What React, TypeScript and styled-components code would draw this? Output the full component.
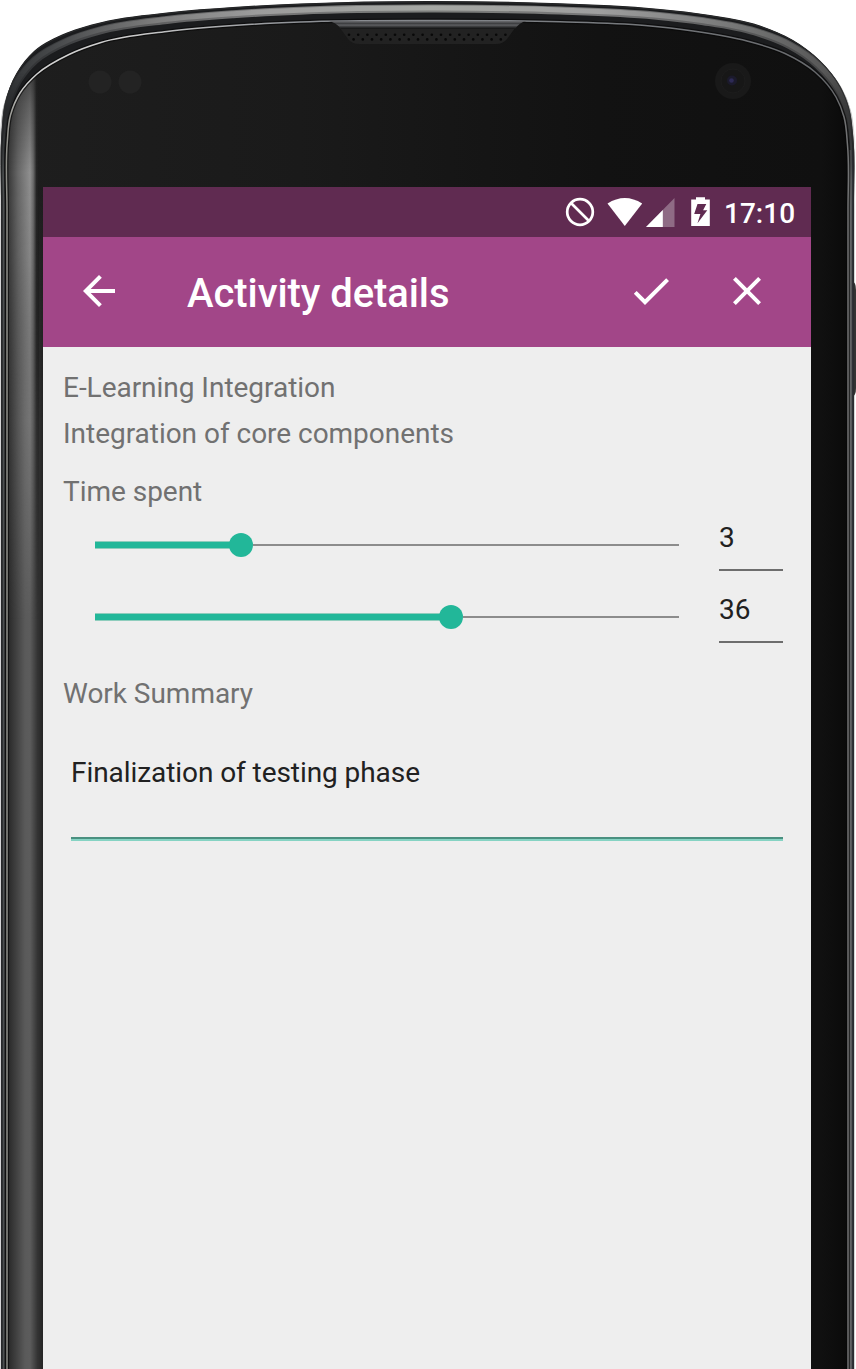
import React from 'react';
import styled, { createGlobalStyle } from 'styled-components';

const GlobalStyle = createGlobalStyle`
  * { box-sizing: border-box; }
  body {
    margin: 0;
    background: #fff;
    font-family: Roboto, "Liberation Sans", sans-serif;
  }
`;

type Point = [number, number];

// Outer silhouette of the handset and the glass edge, sampled at matching stations.
const outer: Point[] = [
  [1, 1400], [1, 230], [1, 200], [1.8, 130], [5, 103], [16.5, 73], [34, 51], [67, 32.5], [100, 22.5],
  [167, 12.5], [233, 7], [300, 3.5], [428, 1], [560, 3.3], [660, 9], [710, 15], [760, 25.5],
  [793, 40], [820, 60.5], [840, 86], [849, 108], [853, 135], [854, 200], [854, 230], [854, 1400],
];
const inner: Point[] = [
  [7, 1400], [7, 240], [7, 210], [7.2, 143], [10.5, 115], [20, 93], [37, 74], [69, 54.5], [101, 42.5],
  [167, 31.5], [233, 25.5], [300, 22], [428, 20.5], [560, 21.8], [645, 25.5], [693, 31], [747, 41],
  [785, 53.5], [815, 72], [836, 97], [844, 117], [847.5, 145], [848, 210], [848, 240], [848, 1400],
];

function between(t: number): Point[] {
  return outer.map(([x, y], i) => [x + (inner[i][0] - x) * t, y + (inner[i][1] - y) * t] as Point);
}

// Catmull-Rom spline with chord-scaled tangents.
function smooth(points: Point[]): string {
  const dist = (a: Point, b: Point) => Math.hypot(a[0] - b[0], a[1] - b[1]);
  const tangent = (i: number): Point => {
    const p = points[i];
    const a = points[Math.max(i - 1, 0)];
    const b = points[Math.min(i + 1, points.length - 1)];
    const da = dist(p, a) || 1e6;
    const db = dist(p, b) || 1e6;
    // The nearer neighbour weighs more, which keeps uneven spacing from bulging.
    const x = ((p[0] - a[0]) / da) * db + ((b[0] - p[0]) / db) * da;
    const y = ((p[1] - a[1]) / da) * db + ((b[1] - p[1]) / db) * da;
    const d = Math.hypot(x, y) || 1;
    return [x / d, y / d];
  };
  let d = `M${points[0][0]} ${points[0][1]}`;
  for (let i = 0; i < points.length - 1; i++) {
    const p = points[i];
    const q = points[i + 1];
    const k = dist(p, q) / 3;
    const tp = tangent(i);
    const tq = tangent(i + 1);
    const n = (v: number) => v.toFixed(2);
    d += `C${n(p[0] + tp[0] * k)} ${n(p[1] + tp[1] * k)} ${n(q[0] - tq[0] * k)} ${n(q[1] - tq[1] * k)} ${n(q[0])} ${n(q[1])}`;
  }
  return d;
}

const Stage = styled.main`
  position: relative;
  width: 856px;
  height: 1369px;
  padding: 187px 45px 0 43px;
  overflow: hidden;
`;

const Handset = styled.svg`
  position: absolute;
  inset: 0;
`;

const Screen = styled.section`
  position: relative;
  display: flex;
  flex-direction: column;
  height: 100%;
  background: #eeeeee;
`;

const StatusBar = styled.div`
  display: flex;
  align-items: center;
  justify-content: flex-end;
  height: 50px;
  padding-right: 16px;
  background: #602b51;
`;

const StatusIcons = styled.svg`
  margin-right: 13px;
`;

const Clock = styled.time`
  width: 71px;
  font-size: 28px;
  font-weight: 500;
  line-height: 50px;
  padding-top: 3px;
  white-space: nowrap;
  color: #fff;
`;

const Toolbar = styled.header`
  display: flex;
  align-items: center;
  height: 110px;
  padding: 0 40px 2px 32px;
  background: #a24688;
`;

const Title = styled.h1`
  flex: 1;
  margin: 0 0 0 64px;
  padding-top: 6px;
  font-size: 40px;
  line-height: 48px;
  font-weight: 500;
  letter-spacing: -0.07px;
  color: #fff;
`;

const ToolButton = styled.button<{ $gap?: number }>`
  display: flex;
  margin: 0 0 0 ${({ $gap = 0 }) => $gap}px;
  padding: 0;
  border: 0;
  background: none;
  color: #fff;
`;

const Content = styled.div`
  display: flex;
  flex-direction: column;
  padding: 18px 28px 0 20px;
`;

const Label = styled.div<{ $top?: number }>`
  margin-top: ${({ $top = 0 }) => $top}px;
  font-size: 28px;
  line-height: 46px;
  letter-spacing: -0.03px;
  color: #717171;
`;

const SliderRow = styled.div`
  display: flex;
  align-items: flex-start;
  justify-content: space-between;
  height: 72px;
  padding-left: 32px;
`;

const Track = styled.div`
  display: flex;
  align-items: center;
  width: 584px;
  height: 60px;
`;

const Filled = styled.div`
  height: 8px;
  border: solid #8fcdbd;
  border-width: 1px 0;
  background: #22b799;
`;

const Thumb = styled.div`
  width: 24px;
  height: 24px;
  margin: 0 0 0 -12px;
  border-radius: 50%;
  background: #22b799;
`;

const Rest = styled.div`
  flex: 1;
  height: 2px;
  background: #8c8c8c;
`;

const NumberField = styled.div`
  width: 64px;
  height: 56px;
  border-bottom: 2px solid #6d6d6d;
  font-size: 28px;
  line-height: 46px;
  color: #212121;
`;

const SummaryField = styled.div`
  height: 91px;
  margin: 33px 0 0 8px;
  border-bottom: 2px solid #85d3c3;
  box-shadow: inset 0 -2px 0 #4a9080;
  font-size: 28px;
  line-height: 46px;
  letter-spacing: -0.07px;
  color: #212121;
`;

function Slider({ value, max }: { value: number; max: number }) {
  return (
    <SliderRow>
      <Track>
        <Filled style={{ width: `${(value / max) * 100}%` }} />
        <Thumb />
        <Rest />
      </Track>
      <NumberField>{value}</NumberField>
    </SliderRow>
  );
}

function Phone() {
  const dots: Point[] = [];
  for (let i = 0; i < 18; i++) {
    dots.push([349 + i * 9.2, 34.8]);
    if (i < 17) dots.push([353.6 + i * 9.2, 39.4]);
  }
  const face = smooth(inner);
  return (
    <Handset width="856" height="1369" viewBox="0 0 856 1369" aria-hidden="true">
      <defs>
        <linearGradient id="leftEdge" gradientUnits="userSpaceOnUse" x1="7" y1="0" x2="43" y2="0">
          <stop offset="0" stopColor="#1d1d1d" />
          <stop offset=".1" stopColor="#303030" />
          <stop offset=".5" stopColor="#5a5a5a" />
          <stop offset=".64" stopColor="#5c5c5c" />
          <stop offset=".85" stopColor="#333" />
          <stop offset="1" stopColor="#252525" />
        </linearGradient>
        <linearGradient id="shine" gradientUnits="userSpaceOnUse" x1="7" y1="0" x2="39" y2="0">
          <stop offset="0" stopColor="#333" />
          <stop offset=".35" stopColor="#686868" />
          <stop offset=".72" stopColor="#909090" />
          <stop offset=".82" stopColor="#6c6c6c" />
          <stop offset=".92" stopColor="#252525" />
          <stop offset="1" stopColor="#1c1c1c" />
        </linearGradient>
        <linearGradient id="shineFade" x1="0" y1="0" x2="0" y2="1">
          <stop offset="0" stopColor="#fff" stopOpacity=".2" />
          <stop offset=".08" stopColor="#fff" stopOpacity=".6" />
          <stop offset=".2" stopColor="#fff" />
          <stop offset=".35" stopColor="#fff" stopOpacity=".9" />
          <stop offset="1" stopColor="#fff" stopOpacity="0" />
        </linearGradient>
        <mask id="shineMask" maskUnits="userSpaceOnUse" x="0" y="0" width="60" height="640">
          <rect x="0" y="60" width="60" height="560" fill="url(#shineFade)" />
        </mask>
        <linearGradient id="leftFade" gradientUnits="userSpaceOnUse" x1="0" y1="187" x2="0" y2="420">
          <stop offset="0" stopColor="#fff" stopOpacity="0" />
          <stop offset="1" stopColor="#fff" />
        </linearGradient>
        <mask id="leftMask" maskUnits="userSpaceOnUse" x="0" y="0" width="60" height="1369">
          <rect x="0" y="187" width="60" height="1200" fill="url(#leftFade)" />
        </mask>
        <linearGradient id="glass" gradientUnits="userSpaceOnUse" x1="0" y1="0" x2="856" y2="0">
          <stop offset="0" stopColor="#1e1e1e" />
          <stop offset=".35" stopColor="#1a1a1a" />
          <stop offset=".7" stopColor="#121212" />
          <stop offset=".96" stopColor="#101010" />
          <stop offset="1" stopColor="#080808" />
        </linearGradient>
        <linearGradient id="band" gradientUnits="userSpaceOnUse" x1="0" y1="0" x2="856" y2="0">
          <stop offset="0" stopColor="#303234" />
          <stop offset=".06" stopColor="#46484a" />
          <stop offset=".18" stopColor="#7c7c7c" />
          <stop offset=".3" stopColor="#9c9c9c" />
          <stop offset=".5" stopColor="#a6a8a4" />
          <stop offset=".7" stopColor="#9f9f9f" />
          <stop offset=".87" stopColor="#737474" />
          <stop offset=".96" stopColor="#585858" />
          <stop offset="1" stopColor="#4c4c4c" />
        </linearGradient>
        <linearGradient id="rim" gradientUnits="userSpaceOnUse" x1="0" y1="0" x2="856" y2="0">
          <stop offset="0" stopColor="#77776f" />
          <stop offset=".03" stopColor="#d2d2d2" />
          <stop offset=".15" stopColor="#ccc" />
          <stop offset=".35" stopColor="#8d9095" />
          <stop offset=".7" stopColor="#777a7e" />
          <stop offset=".97" stopColor="#65676a" />
          <stop offset="1" stopColor="#777" />
        </linearGradient>
        <linearGradient id="speaker" x1="0" y1="0" x2="0" y2="1">
          <stop offset="0" stopColor="#6c6d70" />
          <stop offset=".35" stopColor="#393a3c" />
          <stop offset=".5" stopColor="#626366" />
          <stop offset=".75" stopColor="#303132" />
          <stop offset="1" stopColor="#111" />
        </linearGradient>
        <linearGradient id="upperFade" x1="0" y1="0" x2="0" y2="1">
          <stop offset=".45" stopColor="#fff" />
          <stop offset="1" stopColor="#fff" stopOpacity="0" />
        </linearGradient>
        <mask id="upper" maskUnits="userSpaceOnUse" x="0" y="0" width="856" height="160">
          <rect width="856" height="160" fill="url(#upperFade)" />
        </mask>
        <linearGradient id="sideFade" gradientUnits="userSpaceOnUse" x1="0" y1="110" x2="0" y2="180">
          <stop offset="0" stopColor="#fff" stopOpacity="0" />
          <stop offset="1" stopColor="#fff" />
        </linearGradient>
        <mask id="sides" maskUnits="userSpaceOnUse" x="0" y="0" width="856" height="1369">
          <rect y="100" width="856" height="1269" fill="url(#sideFade)" />
        </mask>
        <clipPath id="faceClip"><path d={face} /></clipPath>
      </defs>

      <path d="M852 281q4 1 4 9v98q0 8-4 9z" fill="#343434" />
      <path d={smooth(outer)} fill="#1b1c1e" />
      <g fill="none">
        <g mask="url(#upper)">
          <path d={smooth(between(0.39))} stroke="url(#band)" strokeWidth="8" opacity=".7" />
          <path d={smooth(between(0.36))} stroke="url(#band)" strokeWidth="5" />
        </g>
        <path d={smooth(between(0.05))} stroke="#2b2c2d" strokeWidth="1" />
        <g mask="url(#sides)">
          <path d={smooth(between(0.43))} stroke="#4c4f50" strokeWidth="2" />
          <path d={smooth(between(0.76))} stroke="#222" strokeWidth="1.4" />
          <path d="M850.2 150V1369" stroke="#626466" strokeWidth="2.6" />
          <path d="M852.8 150V1369" stroke="#303238" strokeWidth="1.4" />
        </g>
      </g>
      <path d={face} fill="url(#glass)" />
      <g clipPath="url(#faceClip)">
        <g mask="url(#leftMask)">
          <rect x="7" y="187" width="37" height="1182" fill="url(#leftEdge)" />
        </g>
        <g mask="url(#shineMask)"><rect x="7" y="60" width="32" height="560" fill="url(#shine)" /></g>
      </g>
      <path d={face} fill="none" stroke="#080808" strokeWidth="4" opacity=".65" />
      <path d={face} fill="none" stroke="url(#rim)" strokeWidth="1.5" />

      <path d="M330 21h196q-6 1-11 7l-8 11q-4 5-11 5H359q-7 0-11-5l-8-11q-4-6-10-7z" fill="#222" />
      <path d="M328 21h198q-6 1-11 8H341q-5-7-13-8z" fill="url(#speaker)" />
      <g fill="#080808">
        {dots.map(([x, y]) => <circle key={`${x}-${y}`} cx={x} cy={y} r="1.3" />)}
      </g>

      <circle cx="100" cy="82" r="11.5" fill="#232323" />
      <circle cx="130" cy="82" r="11.5" fill="#232323" />
      <circle cx="733" cy="81" r="18" fill="#191919" />
      <circle cx="733" cy="81" r="12" fill="#171717" stroke="#1d1d1d" />
      <circle cx="732" cy="80.5" r="5" fill="#1b1a2b" />
      <circle cx="731.5" cy="80.5" r="2.3" fill="#2d2a55" />
    </Handset>
  );
}

export default function App() {
  return (
    <>
      <GlobalStyle />
      <Stage>
        <Phone />
        <Screen>
          <StatusBar>
            <StatusIcons width="148" height="50" viewBox="0 0 148 50" aria-hidden="true">
              <g fill="none" stroke="#fff" strokeWidth="2.7">
                <circle cx="17" cy="25" r="12.8" />
                <path d="M8 16l18 18" />
              </g>
              <path d="M44.5 16.5Q61.8 5.5 79.2 16.5L61.8 39z" fill="#fff" />
              <path d="M111.5 11V40H83z" fill="#8f6b85" />
              <path d="M99.8 23V40H83z" fill="#fff" />
              <path fillRule="evenodd" fill="#fff" d="M128.2 12.6h4.8v-2.4h9v2.4h4.8V39h-18.6zM134.5 17h8.8l-3.2 6.3h4.2l-9.8 13 2.9-9.3h-6.2z" />
            </StatusIcons>
            <Clock>17:10</Clock>
          </StatusBar>
          <Toolbar>
            <ToolButton aria-label="Back">
              <svg width="48" height="48" viewBox="0 0 24 24" fill="currentColor">
                <path d="M20 11H7.83l5.59-5.59L12 4l-8 8 8 8 1.41-1.41L7.83 13H20v-2z" />
              </svg>
            </ToolButton>
            <Title>Activity details</Title>
            <ToolButton aria-label="Save">
              <svg width="48" height="48" viewBox="0 0 24 24" fill="currentColor">
                <path d="M9 16.17L4.83 12l-1.42 1.41L9 19 21 7l-1.41-1.41z" />
              </svg>
            </ToolButton>
            <ToolButton aria-label="Discard" $gap={48}>
              <svg width="48" height="48" viewBox="0 0 24 24" fill="currentColor">
                <path d="M19 6.41L17.59 5 12 10.59 6.41 5 5 6.41 10.59 12 5 17.59 6.41 19 12 13.41 17.59 19 19 17.59 13.41 12z" />
              </svg>
            </ToolButton>
          </Toolbar>
          <Content>
            <Label>E-Learning Integration</Label>
            <Label>Integration of core components</Label>
            <Label $top={12}>Time spent</Label>
            <Slider value={3} max={12} />
            <Slider value={36} max={59} />
            <Label $top={12}>Work Summary</Label>
            <SummaryField>Finalization of testing phase</SummaryField>
          </Content>
        </Screen>
      </Stage>
    </>
  );
}
